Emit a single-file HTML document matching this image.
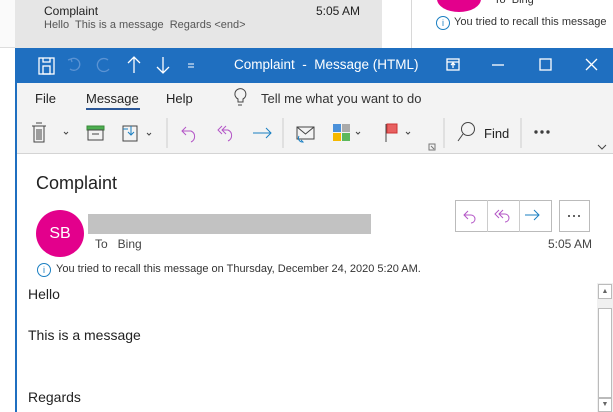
<!DOCTYPE html><html><head><meta charset="utf-8"><style>
*{margin:0;padding:0;box-sizing:border-box}
body{width:613px;height:412px;overflow:hidden;position:relative;font-family:"Liberation Sans",sans-serif;background:#fff;color:#222}
.a{position:absolute}
</style></head><body>
<div class="a" style="left:0;top:0;width:15px;height:48px;background:#fafafa;border-bottom:1px solid #ddd"></div>
<div class="a" style="left:15px;top:0;width:367px;height:48px;background:#e6e6e6"></div>
<div class="a" style="left:44px;top:4px;font-size:12px;color:#222">Complaint</div>
<div class="a" style="left:316px;top:4px;font-size:12px;color:#222">5:05 AM</div>
<div class="a" style="left:44px;top:19px;font-size:11px;color:#555">Hello&nbsp; This is a message&nbsp; Regards &lt;end&gt;</div>
<div class="a" style="left:411px;top:0;width:1px;height:48px;background:#d8d8d8"></div>
<div class="a" style="left:437px;top:-14px;width:44px;height:26px;border-radius:50%;background:#e3008c"></div>
<div class="a" style="left:494px;top:-6px;font-size:11px;color:#333">To&nbsp; Bing</div>
<div class="a" style="left:436px;top:16px;width:14px;height:14px;border:1px solid #1a7fc2;border-radius:50%;font-size:9px;color:#1a7fc2;text-align:center;line-height:12px">i</div>
<div class="a" style="left:454px;top:16px;font-size:11px;color:#333;white-space:nowrap">You tried to recall this message</div>

<div class="a" style="left:15px;top:48px;width:598px;height:364px;border-left:2px solid #1f6fc0;background:#fff"></div>
<div class="a" style="left:15px;top:48px;width:598px;height:35px;background:#1f6fc0"></div>
<div class="a" style="left:17px;top:83px;width:596px;height:71px;background:#f3f3f3;border-bottom:1px solid #d4d4d4"></div>
<svg class="a" style="left:0;top:0" width="613" height="160" fill="none" stroke="#fff" stroke-width="1.3">
<rect x="39" y="58" width="15" height="16"/><rect x="43" y="66" width="7" height="8"/><path d="M43 58v4h7v-4"/>
<path d="M71 59a6 6 0 1 1-1 10M68 60l3-1 1 3" stroke="#5b93d3"/>
<path d="M108 60a6.5 6.5 0 1 0 1 9" stroke="#5b93d3"/>
<path d="M134 57v16M128 63l6-6 6 6"/><path d="M163 57v16M157 67l6 6 6-6"/>
<path d="M188 64h6M188 67h6" stroke-width="1"/>
<rect x="447" y="59" width="12" height="11"/><path d="M447 62h12M453 68v-5M451 65l2-2 2 2"/>
<path d="M492 65h12"/><rect x="540" y="59" width="11" height="11"/><path d="M586 59l11 11M597 59l-11 11"/>
<g stroke="#444" stroke-width="1">
<path d="M235 93a5.5 5.5 0 1 1 8 6v3h-5v-3a5.5 5.5 0 0 1-3-6M238 105h4"/>
<rect x="34" y="126" width="10" height="16"/><path d="M32 126h14M36 123h6M37 129v11M39 129v11M41 129v11"/>
<path d="M64 132l2 2 2-2"/>
<rect x="87" y="126" width="17" height="4" fill="#4caf50" stroke="#3a8a3a"/><rect x="88" y="130" width="15" height="10"/><path d="M92 134h7"/>
<rect x="123" y="126" width="14" height="15"/><path d="M123 129h5M131 126v9M128 132l3 3 3-3" stroke="#1a7fc2"/><path d="M147 133l2 2 2-2"/>
<path d="M167 118v30M283 118v30M444 118v30M521 118v30" stroke="#ccc"/>
<path d="M186 127l-4 4 4 4M182 131h9a6 6 0 0 1 0 11" stroke="#b355c6"/>
<path d="M222 126l-4 4 4 4M226 126l-4 4 4 4M222 130h6a6 6 0 0 1 0 11" stroke="#b355c6"/>
<path d="M253 133h18M266 128l5 5-5 5" stroke="#1a7fc2"/>
<rect x="297" y="127" width="17" height="12"/><path d="M297 127l8.5 7 8.5-7"/><path d="M299 136a4 4 0 0 0 4 6l-2-2" stroke="#1a7fc2"/>
<rect x="333" y="124" width="8" height="8" fill="#4a90d9" stroke="none"/><rect x="342" y="124" width="8" height="8" fill="#aaa" stroke="none"/>
<rect x="333" y="133" width="8" height="8" fill="#f5b800" stroke="none"/><rect x="342" y="133" width="8" height="8" fill="#5cb85c" stroke="none"/>
<path d="M356 132l2 2 2-2"/>
<path d="M386 124v18"/><rect x="387" y="124" width="10" height="9" fill="#e86060" stroke="#c33"/><path d="M406 132l2 2 2-2"/>
<rect x="429" y="144" width="6" height="6" stroke="#777"/><path d="M431 146l3 3" stroke="#777"/>
<circle cx="468" cy="129" r="6.5"/><path d="M463 134l-5 7"/>
<circle cx="536" cy="132" r="1.2" fill="#333"/><circle cx="542" cy="132" r="1.2" fill="#333"/><circle cx="548" cy="132" r="1.2" fill="#333"/>
<path d="M598 145l4 4 4-4"/>
</g>
</svg>
<div class="a" style="left:234px;top:57px;font-size:13.5px;color:#fff">Complaint&nbsp; -&nbsp; Message (HTML)</div>
<div class="a" style="left:35px;top:91px;font-size:13px">File</div>
<div class="a" style="left:86px;top:91px;font-size:13px">Message</div>
<div class="a" style="left:86px;top:108px;width:54px;height:2px;background:#2b5797"></div>
<div class="a" style="left:166px;top:91px;font-size:13px">Help</div>
<div class="a" style="left:261px;top:91px;font-size:13px;color:#333">Tell me what you want to do</div>
<div class="a" style="left:484px;top:126px;font-size:13px">Find</div>

<div class="a" style="left:36px;top:173px;font-size:18px;color:#222">Complaint</div>
<div class="a" style="left:36px;top:210px;width:48px;height:47px;border-radius:50%;background:#e3008c;color:#fff;font-size:16px;text-align:center;line-height:47px">SB</div>
<div class="a" style="left:88px;top:214px;width:283px;height:20px;background:#c2c2c2"></div>
<div class="a" style="left:95px;top:237px;font-size:12px;color:#444">To&nbsp;&nbsp; Bing</div>
<div class="a" style="left:455px;top:200px;width:97px;height:32px;border:1px solid #bbb;background:#fff"></div>
<div class="a" style="left:487px;top:200px;width:1px;height:32px;background:#ccc"></div>
<div class="a" style="left:519px;top:200px;width:1px;height:32px;background:#ccc"></div>
<div class="a" style="left:559px;top:200px;width:31px;height:32px;border:1px solid #bbb"></div>
<svg class="a" style="left:455px;top:200px" width="140" height="32" fill="none" stroke-width="1">
<path d="M13 11l-4 4 4 4M9 15h7a4 4 0 0 1 0 8" stroke="#b355c6"/>
<path d="M44 10l-4 4 4 4M48 10l-4 4 4 4M44 14h6a4 4 0 0 1 0 8" stroke="#b355c6"/>
<path d="M70 15h14M79 10l5 5-5 5" stroke="#1a7fc2"/>
<circle cx="114" cy="16" r="1" fill="#333"/><circle cx="119" cy="16" r="1" fill="#333"/><circle cx="124" cy="16" r="1" fill="#333"/>
</svg>
<div class="a" style="left:548px;top:237px;font-size:12px;color:#444">5:05 AM</div>
<div class="a" style="left:37px;top:263px;width:14px;height:14px;border:1px solid #1a7fc2;border-radius:50%;font-size:9px;color:#1a7fc2;text-align:center;line-height:12px">i</div>
<div class="a" style="left:56px;top:263px;font-size:11px;color:#333;white-space:nowrap">You tried to recall this message on Thursday, December 24, 2020 5:20 AM.</div>
<div class="a" style="left:28px;top:286px;font-size:14px">Hello</div>
<div class="a" style="left:28px;top:327px;font-size:14px">This is a message</div>
<div class="a" style="left:28px;top:389px;font-size:14px">Regards</div>
<div class="a" style="left:597px;top:283px;width:16px;height:129px;background:#f0f0f0"></div>
<div class="a" style="left:598px;top:284px;width:14px;height:15px;border:1px solid #bbb;background:#fff;font-size:7px;text-align:center;color:#666;line-height:13px">▲</div>
<div class="a" style="left:598px;top:308px;width:14px;height:90px;border:1px solid #bbb;background:#fff"></div>
<div class="a" style="left:598px;top:398px;width:14px;height:14px;border:1px solid #bbb;background:#fff;font-size:7px;text-align:center;color:#666;line-height:12px">▼</div>
</body></html>
